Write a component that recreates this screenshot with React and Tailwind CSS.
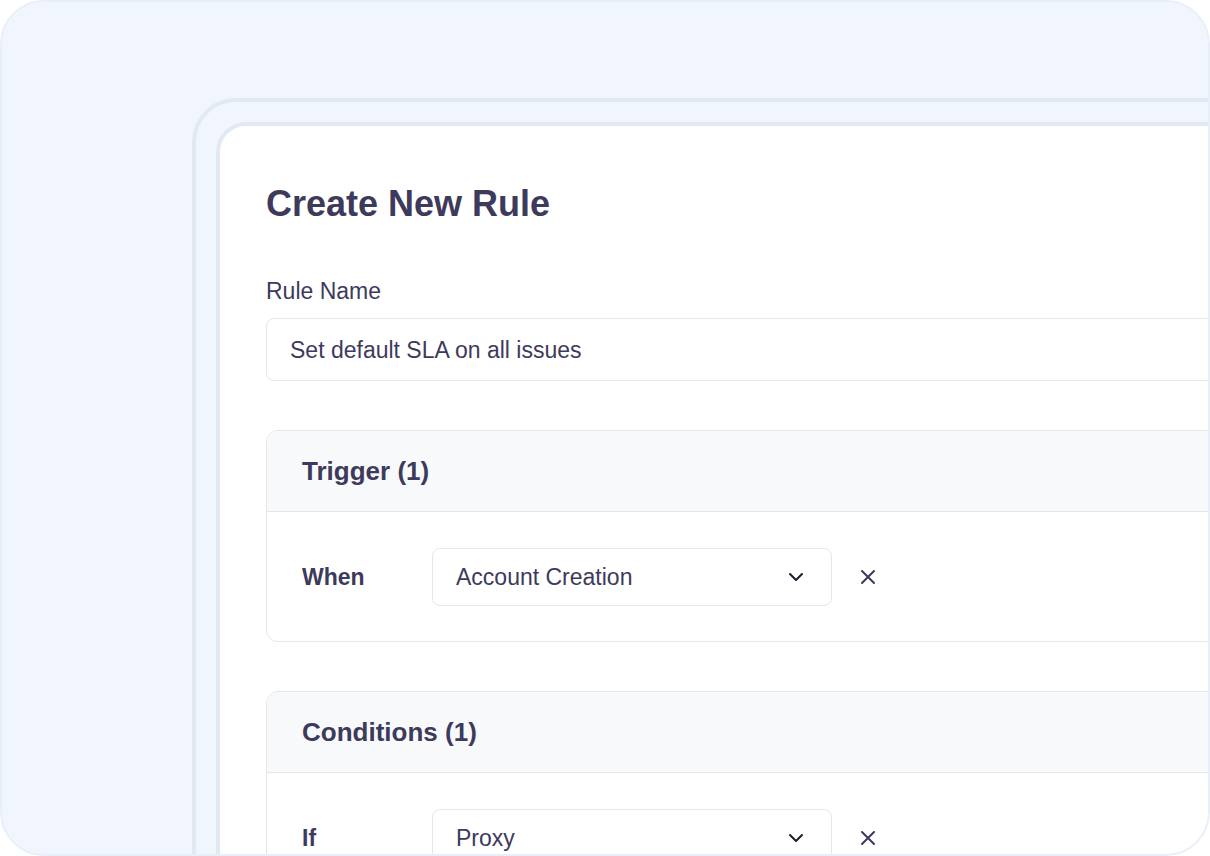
import React from 'react';

const font = { fontFamily: '"Liberation Sans", Arial, sans-serif' };

function Chevron() {
    return (
        <svg width="16" height="10" viewBox="0 0 16 10" fill="none" stroke="#1f1d2e" strokeWidth="2" strokeLinecap="round" strokeLinejoin="round">
            <path d="M2 2l6 6 6-6" />
        </svg>
    );
}

function Cross() {
    return (
        <svg width="16" height="16" viewBox="0 0 16 16" fill="none" stroke="#3d3a5c" strokeWidth="2" strokeLinecap="round">
            <path d="M2 2l12 12M14 2L2 14" />
        </svg>
    );
}

function Section({ title, count, label, value }) {
    return (
        <div className="mt-[49px] rounded-[12px] border border-[#e6e6ea] overflow-hidden">
            <div className="h-[81px] flex items-center pl-[35px] bg-[#f8f9fb] border-b border-[#e6e6ea]">
                <span className="text-[26px] leading-[30px] font-bold text-[#3d3a5c]">{title} <span>({count})</span></span>
            </div>
            <div className="flex items-center pl-[35px] pt-[36px] pb-[35px]">
                <span className="w-[130px] text-[23px] leading-[28px] font-bold text-[#3d3a5c]">{label}</span>
                <div className="w-[400px] h-[58px] flex items-center justify-between pl-[23px] pr-[27px] rounded-[8px] border border-[#e6e6ea] bg-white">
                    <span className="text-[23px] leading-[28px] text-[#3d3a5c]">{value}</span>
                    <Chevron />
                </div>
                <div className="ml-[28px] flex items-center">
                    <Cross />
                </div>
            </div>
        </div>
    );
}

export default function App() {
    return (
        <div style={font} className="w-[1210px] h-[856px] overflow-hidden rounded-[44px] border-2 border-[#e9eff9] bg-[#f1f6fe] pl-[190px] pt-[96px]">
            <div className="w-[1200px] rounded-tl-[44px] border-4 border-r-0 border-b-0 border-[#e3e9f4] pt-5 pl-5">
                <div className="rounded-tl-[30px] border-4 border-r-0 border-b-0 border-[#e3e9f4] bg-white pl-[46px] pt-[58px] pb-10">
                    <h2 className="text-[36px] leading-[40px] font-bold text-[#3d3a5c]">Create New Rule</h2>
                    <div className="mt-[53px] text-[23px] leading-[28px] text-[#3d3a5c]">Rule Name</div>
                    <div className="mt-[13px] h-[63px] flex items-center pl-[23px] rounded-[8px] border border-[#e6e6ea]">
                        <span className="text-[23px] leading-[28px] text-[#3d3a5c]">Set default SLA on all issues</span>
                    </div>
                    <Section title="Trigger" count={1} label="When" value="Account Creation" />
                    <Section title="Conditions" count={1} label="If" value="Proxy" />
                </div>
            </div>
        </div>
    );
}
